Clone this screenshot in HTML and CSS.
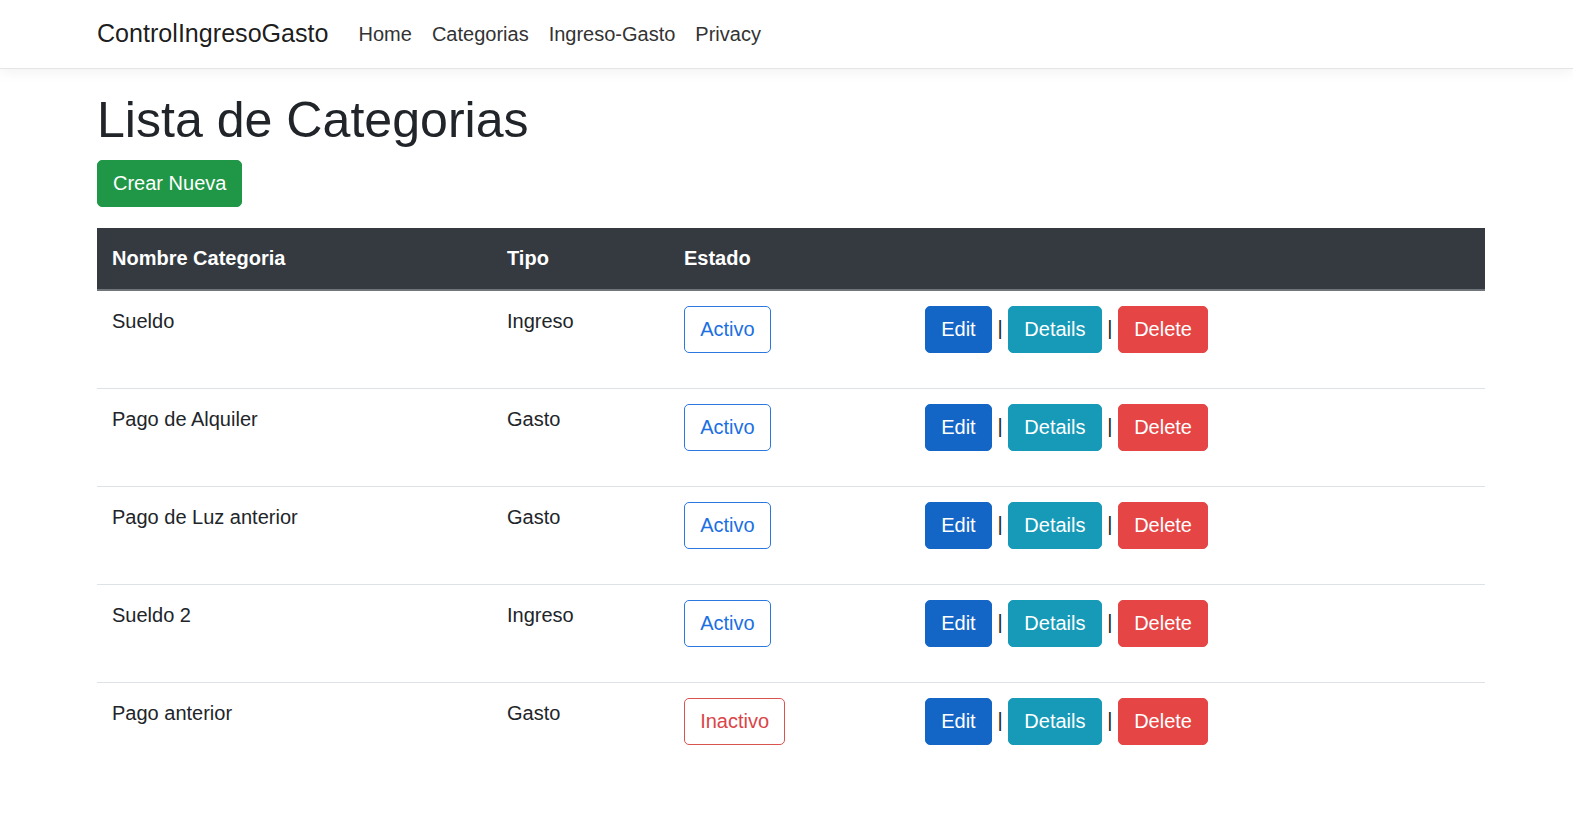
FILE: index.html
```html
<!DOCTYPE html>
<html lang="es">
<head>
<meta charset="utf-8">
<title>Lista de Categorias - ControlIngresoGasto</title>
<link rel="stylesheet" href="styles.css">
</head>
<body>
<header class="navbar">
  <div class="container nav-inner">
    <a class="brand" href="#">ControlIngresoGasto</a>
    <ul class="nav-links">
      <li><a href="#">Home</a></li>
      <li><a href="#">Categorias</a></li>
      <li><a href="#">Ingreso-Gasto</a></li>
      <li><a href="#">Privacy</a></li>
    </ul>
  </div>
</header>
<main class="container">
  <h1 class="title">Lista de Categorias</h1>
  <p class="create-row"><a class="btn btn-success" href="#">Crear Nueva</a></p>
  <table class="table">
    <colgroup>
      <col class="c1"><col class="c2"><col class="c3"><col>
    </colgroup>
    <thead>
      <tr><th>Nombre Categoria</th><th>Tipo</th><th>Estado</th><th></th></tr>
    </thead>
    <tbody>
      <tr>
        <td>Sueldo</td><td>Ingreso</td>
        <td><a class="btn btn-outline-primary" href="#">Activo</a></td>
        <td><a class="btn btn-primary" href="#">Edit</a> | <a class="btn btn-info" href="#">Details</a> | <a class="btn btn-danger" href="#">Delete</a></td>
      </tr>
      <tr>
        <td>Pago de Alquiler</td><td>Gasto</td>
        <td><a class="btn btn-outline-primary" href="#">Activo</a></td>
        <td><a class="btn btn-primary" href="#">Edit</a> | <a class="btn btn-info" href="#">Details</a> | <a class="btn btn-danger" href="#">Delete</a></td>
      </tr>
      <tr>
        <td>Pago de Luz anterior</td><td>Gasto</td>
        <td><a class="btn btn-outline-primary" href="#">Activo</a></td>
        <td><a class="btn btn-primary" href="#">Edit</a> | <a class="btn btn-info" href="#">Details</a> | <a class="btn btn-danger" href="#">Delete</a></td>
      </tr>
      <tr>
        <td>Sueldo 2</td><td>Ingreso</td>
        <td><a class="btn btn-outline-primary" href="#">Activo</a></td>
        <td><a class="btn btn-primary" href="#">Edit</a> | <a class="btn btn-info" href="#">Details</a> | <a class="btn btn-danger" href="#">Delete</a></td>
      </tr>
      <tr class="last">
        <td>Pago anterior</td><td>Gasto</td>
        <td><a class="btn btn-outline-danger" href="#">Inactivo</a></td>
        <td><a class="btn btn-primary" href="#">Edit</a> | <a class="btn btn-info" href="#">Details</a> | <a class="btn btn-danger" href="#">Delete</a></td>
      </tr>
    </tbody>
  </table>
</main>
</body>
</html>
```
FILE: styles.css
```css
* { box-sizing: border-box; }
html, body { margin: 0; padding: 0; }
body {
  font-family: "Liberation Sans", Arial, sans-serif;
  font-size: 20px;
  line-height: 1.5;
  color: #212529;
  background: #fff;
}
a { text-decoration: none; }
.container {
  padding: 0 88px 0 97px;
}
.navbar {
  height: 69px;
  border-bottom: 1px solid #e5e5e5;
  box-shadow: 0 4px 12px rgba(0, 0, 0, 0.05);
  background: #fff;
  margin-bottom: 21px;
}
.nav-inner {
  display: flex;
  align-items: center;
  height: 68px;
}
.brand {
  font-size: 25.1px;
  color: rgba(0, 0, 0, 0.9);
  margin-right: 20px;
  line-height: 1.5;
}
.nav-links {
  display: flex;
  list-style: none;
  margin: 0;
  padding: 0;
}
.nav-links a {
  display: block;
  padding: 8px 10px;
  color: #333;
  font-size: 20px;
}
.title {
  font-size: 50.1px;
  font-weight: 500;
  line-height: 1.2;
  margin: 0 0 10px;
  color: #212529;
}
.create-row {
  margin: 0 0 21px;
}
.btn {
  display: inline-block;
  padding: 8px 15.2px;
  line-height: 29px;
  font-size: 20px;
  border: 1px solid transparent;
  border-radius: 5px;
  vertical-align: middle;
  white-space: nowrap;
}
.btn-success { background: #1f9747; border-color: #1f9747; color: #fff; padding: 8px 15px; }
.btn-primary { background: #1466c6; border-color: #1466c6; color: #fff; }
.btn-info { background: #169ab8; border-color: #169ab8; color: #fff; }
.btn-danger { background: #e54545; border-color: #e54545; color: #fff; }
.btn-outline-primary { background: #fff; border-color: #2a78e0; color: #1c6fe2; }
.btn-outline-danger { background: #fff; border-color: #d9534f; color: #db4448; }
.table {
  width: 100%;
  border-collapse: collapse;
  table-layout: fixed;
}
.c1 { width: 395px; }
.c2 { width: 177px; }
.c3 { width: 241px; }
.table th {
  background: #343a40;
  color: #fff;
  text-align: left;
  font-weight: 700;
  padding: 16px 15px;
  line-height: 29px;
  border-bottom: 2px solid #6f757b;
}
.table td {
  padding: 15px 15px 35px;
  vertical-align: top;
  border-bottom: 1px solid #dee2e6;
  color: #212529;
}
.table tr.last td { border-bottom: none; }
```
